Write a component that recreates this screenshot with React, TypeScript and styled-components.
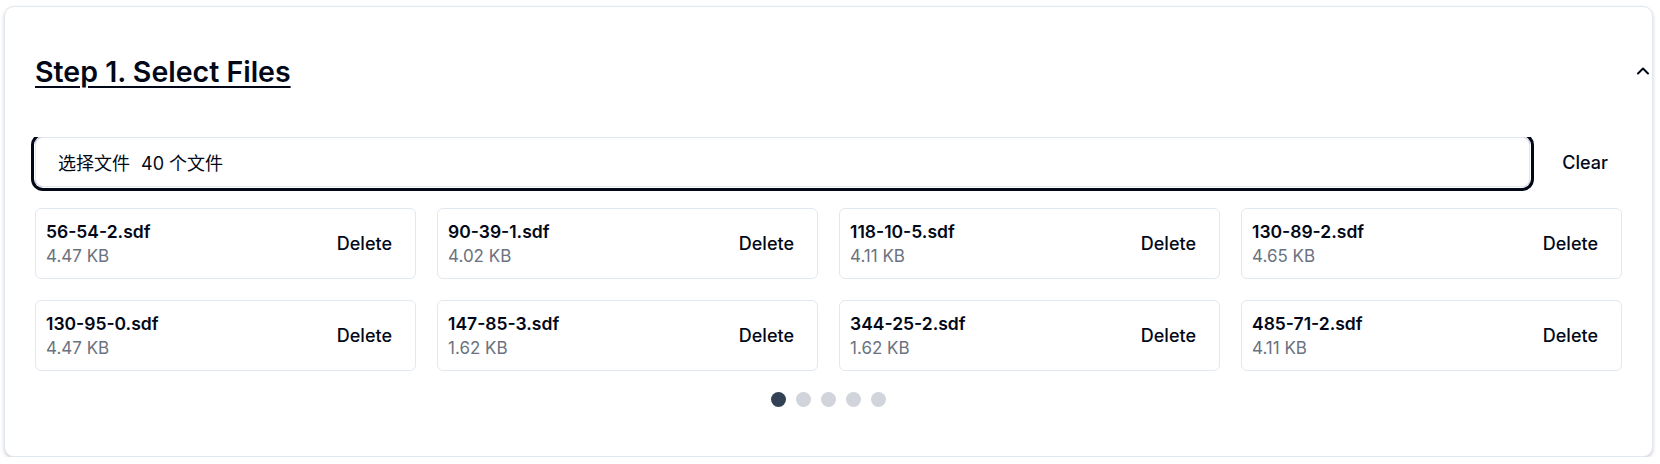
import React from 'react';
import { styled, createGlobalStyle } from 'styled-components';

const GlobalStyle = createGlobalStyle`
  html, body {
    margin: 0;
    padding: 0;
    background: #ffffff;
  }
  body {
    font-family: Inter, "Noto Sans CJK SC", "Noto Sans", sans-serif;
    color: #020817;
  }
  * {
    box-sizing: border-box;
  }
`;

const Page = styled.div`
  padding: 6px 7px 0 4px;
`;

const Card = styled.section`
  border: 1px solid #e2e8f0;
  border-radius: 10px;
  background: #ffffff;
  box-shadow: 0 2px 4px rgba(15, 23, 42, 0.14), 0 1px 2px rgba(15, 23, 42, 0.08);
`;

const Header = styled.div`
  display: flex;
  align-items: center;
  justify-content: space-between;
  height: 130px;
  padding: 0 2px 0 30px;
`;

const Title = styled.h2`
  margin: 0;
  font-size: 28.5px;
  font-weight: 600;
  line-height: 36px;
  text-decoration: underline;
  text-decoration-thickness: 2px;
  text-underline-offset: 4px;
  color: #020817;
`;

const Toggle = styled.button`
  display: flex;
  align-items: center;
  justify-content: center;
  width: 14px;
  height: 20px;
  padding: 0;
  border: 0;
  background: transparent;
  color: #020817;
  margin-top: -3px;
`;

const Content = styled.div`
  overflow: hidden;
  padding: 0 30px 49px 30px;
`;

const PickerRow = styled.div`
  display: flex;
  align-items: center;
  gap: 16px;
  margin-bottom: 21px;
`;

const FileInput = styled.label`
  flex: 1;
  display: flex;
  align-items: center;
  gap: 11px;
  height: 50px;
  padding: 0 22px;
  border: 1px solid #e2e8f0;
  border-radius: 8px;
  font-size: 18px;
  color: #020817;
  box-shadow: 0 0 0 1px #ffffff, 0 0 0 4px #020817;
`;

const TextButton = styled.button`
  border: 0;
  background: transparent;
  padding: 0 12px;
  height: 40px;
  font-family: inherit;
  font-size: 18px;
  font-weight: 500;
  color: #020817;
  cursor: pointer;
`;

const ClearButton = styled(TextButton)`
  padding: 0 14px 0 16px;
`;

const FileGrid = styled.div`
  display: grid;
  grid-template-columns: repeat(4, 1fr);
  gap: 21px;
`;

const FileCard = styled.div`
  display: flex;
  align-items: center;
  justify-content: space-between;
  height: 71px;
  padding: 0 11px 0 10px;
  border: 1px solid #e2e8f0;
  border-radius: 6px;
`;

const FileInfo = styled.div`
  display: flex;
  flex-direction: column;
`;

const FileName = styled.span`
  font-size: 17.5px;
  font-weight: 600;
  line-height: 25px;
  color: #020817;
`;

const FileSize = styled.span`
  font-size: 17px;
  line-height: 25px;
  color: #6b7280;
`;

const Dots = styled.div`
  display: flex;
  justify-content: center;
  gap: 10px;
  margin-top: 21px;
`;

const Dot = styled.span<{ active?: boolean }>`
  width: 15px;
  height: 15px;
  border-radius: 50%;
  background: ${({ active }) => (active ? '#334155' : '#d1d5db')};
`;

const files = [
  { name: '56-54-2.sdf', size: '4.47 KB' },
  { name: '90-39-1.sdf', size: '4.02 KB' },
  { name: '118-10-5.sdf', size: '4.11 KB' },
  { name: '130-89-2.sdf', size: '4.65 KB' },
  { name: '130-95-0.sdf', size: '4.47 KB' },
  { name: '147-85-3.sdf', size: '1.62 KB' },
  { name: '344-25-2.sdf', size: '1.62 KB' },
  { name: '485-71-2.sdf', size: '4.11 KB' },
];

const App: React.FC = () => {
  return (
    <Page>
      <GlobalStyle />
      <Card>
        <Header>
          <Title>Step 1. Select Files</Title>
          <Toggle aria-label="collapse">
            <svg width="14" height="10" viewBox="0 0 14 10" fill="none">
              <path d="M2 7.5 7 2.5 12 7.5" stroke="currentColor" strokeWidth="2" strokeLinecap="round" strokeLinejoin="round" />
            </svg>
          </Toggle>
        </Header>
        <Content>
          <PickerRow>
            <FileInput>
              <span>选择文件</span>
              <span>40 个文件</span>
            </FileInput>
            <ClearButton>Clear</ClearButton>
          </PickerRow>
          <FileGrid>
            {files.map((f) => (
              <FileCard key={f.name}>
                <FileInfo>
                  <FileName>{f.name}</FileName>
                  <FileSize>{f.size}</FileSize>
                </FileInfo>
                <TextButton>Delete</TextButton>
              </FileCard>
            ))}
          </FileGrid>
          <Dots>
            {[0, 1, 2, 3, 4].map((i) => (
              <Dot key={i} active={i === 0} />
            ))}
          </Dots>
        </Content>
      </Card>
    </Page>
  );
};

export default App;
